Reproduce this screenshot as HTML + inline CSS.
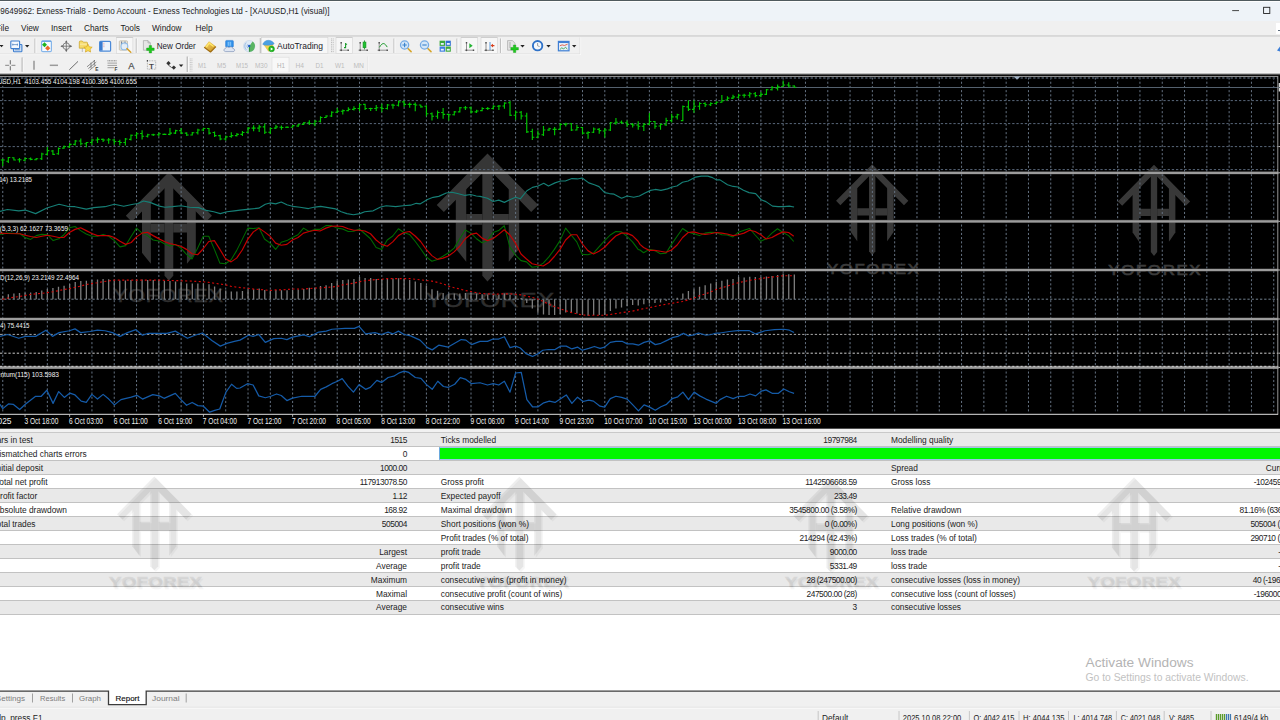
<!DOCTYPE html>
<html lang="en">
<head>
<meta charset="utf-8">
<title>69649962: Exness-Trial8 - Demo Account - Exness Technologies Ltd - [XAUUSD,H1 (visual)]</title>
<style>
html,body{margin:0;padding:0;width:1280px;height:720px;overflow:hidden;background:#fff;}
body{font-family:"Liberation Sans",sans-serif;font-size:8.35px;color:#1a1a1a;position:relative;}
#app{position:absolute;left:0;top:0;width:1280px;height:720px;overflow:hidden;background:#fff;}
.abs{position:absolute;white-space:nowrap;}
.titlebar{position:absolute;left:0;top:0;width:1280px;height:21.500px;background:#eef3f8;border-top:1.100px solid #4f5a5e;box-shadow:inset 0 1px 0 #fdfdfd;box-sizing:border-box;}
.titlebar .t{position:absolute;right:950.5px;top:6.3px;font-size:8.15px;color:#1d1d1d;white-space:nowrap;}
.menubar{position:absolute;left:0;top:21px;width:1280px;height:14.400px;background:#f0f0f0;border-bottom:0.600px solid #d8d8d8;}
.menubar span{position:absolute;top:2.1px;font-size:8.3px;color:#1a1a1a;white-space:nowrap;}
.tb1{position:absolute;left:0;top:37px;width:1280px;height:19px;background:#f0f0f0;}
.tb2{position:absolute;left:0;top:56px;width:1280px;height:19px;background:#f0f0f0;}
.chartwrap{position:absolute;left:0;top:72px;width:1280px;height:357px;}
.report{position:absolute;left:0;top:428.6px;width:1280px;height:190px;background:#fff;}
.row{position:absolute;left:0;width:1280px;height:13.2px;border-bottom:0.8px solid #c2c2c2;}
.row.g{background:#e9e9e9;}
.row.w{background:#fff;}
.c{position:absolute;white-space:nowrap;font-size:8.35px;color:#1c1c1c;line-height:13.4px;top:0.7px;}
.n{letter-spacing:-0.45px;}
.tabs{position:absolute;left:0;top:690px;width:1280px;height:18px;background:#f0f0f0;}
.status{position:absolute;left:0;top:708px;width:1280px;height:12px;background:#f0f0f0;border-top:1px solid #fbfbfb;box-sizing:border-box;}
</style>
</head>
<body>
<div id="app">

<div class="titlebar"><span class="t">69649962: Exness-Trial8 - Demo Account - Exness Technologies Ltd - [XAUUSD,H1 (visual)]</span>
<svg class="abs" style="left:1220px;top:0" width="60" height="21" viewBox="0 0 60 21"><path d="M12.2 9.6h6.8" stroke="#333" stroke-width="0.9" fill="none"/><rect x="43.6" y="6.3" width="6.2" height="6.2" fill="none" stroke="#222" stroke-width="0.9"/></svg>
</div>
<div class="menubar"><span style="right:1271px">File</span><span style="left:21px">View</span><span style="left:51px">Insert</span><span style="left:84px">Charts</span><span style="left:120.5px">Tools</span><span style="left:152px">Window</span><span style="left:195.5px">Help</span>
<div class="abs" style="left:1276px;top:2.200px;width:4px;height:10.800px;background:#fff;"></div><div class="abs" style="left:1278px;top:9.200px;width:2px;height:1px;background:#5a6a7c;"></div>
</div>

<svg class="abs" style="left:0;top:36px" width="1280" height="40" viewBox="0 36 1280 40" font-family="Liberation Sans, sans-serif">
<defs>
<linearGradient id="gBlue" x1="0" y1="0" x2="0" y2="1"><stop offset="0" stop-color="#7fb2ea"/><stop offset="1" stop-color="#2f6fc4"/></linearGradient>
<linearGradient id="gGold" x1="0" y1="0" x2="1" y2="1"><stop offset="0" stop-color="#f7d774"/><stop offset="1" stop-color="#c98f14"/></linearGradient>
<linearGradient id="gGreen" x1="0" y1="0" x2="0" y2="1"><stop offset="0" stop-color="#5fe05f"/><stop offset="1" stop-color="#12a012"/></linearGradient>
</defs>
<rect x="0" y="36" width="1280" height="40" fill="#f0f0f0"/>
<!-- toolbar1 band edges -->
<path d="M0 54.6H580.6V37.5" fill="none" stroke="#fdfdfd" stroke-width="1"/>
<path d="M0 53.9H579.9V37.5" fill="none" stroke="#d6d6d6" stroke-width="0.6"/>
<rect x="0" y="36" width="1280" height="0.800" fill="#d6d6d6"/>
<!-- pressed buttons -->
<g fill="#f7f7f7" stroke="#d4d4d4" stroke-width="0.600">
<rect x="116.3" y="37.6" width="16.6" height="15.8"/>
<rect x="261.3" y="37.6" width="66.6" height="15.8"/>
<rect x="336" y="37.6" width="16.3" height="15.8"/>
<rect x="461" y="37.6" width="16.6" height="15.8"/>
<rect x="481" y="37.6" width="16.3" height="15.8"/>
</g>
<g fill="#cdcdcd"><rect x="116.300" y="36.900" width="16.600" height="1"/><rect x="336" y="36.900" width="16.300" height="1"/><rect x="461" y="36.900" width="16.600" height="1"/><rect x="481" y="36.900" width="16.300" height="1"/></g>
<!-- separators tb1 -->
<g stroke="#bdbdbd" stroke-width="1.1"><path d="M35 38.5V53M136.300 38.500V53M260.300 38V53.300M394 38.500V53M457 38.500V53M500.500 38.500V53"/></g>
<g stroke="#fcfcfc" stroke-width="0.8"><path d="M35.9 38.5V53M137.2 38.5V53M394.9 38.5V53M457.9 38.5V53M501.4 38.5V53"/></g>
<!-- grip -->
<path d="M331.5 38.5V53M333.2 38.5V53" stroke="#b5b5b5" stroke-width="0.9" stroke-dasharray="0.9 0.9"/>
<!-- dropdown arrows -->
<g fill="#222"><path d="M-0.5 45h4l-2 2.3z"/><path d="M25 45h4.4l-2.2 2.4z"/><path d="M520.3 45h4.4l-2.2 2.4z"/><path d="M546.3 45h4.4l-2.2 2.4z"/><path d="M572 45h4.4l-2.2 2.4z"/></g>
<!-- profiles icon -->
<g fill="#f4f8fd" stroke="#3f7fcf" stroke-width="1.1"><rect x="13.5" y="44.5" width="8.4" height="7.2" rx="0.8" fill="#cfe0f5"/><rect x="10.8" y="41" width="8.8" height="7.6" rx="0.8"/></g>
<path d="M12.3 44.6h5.6M12.8 43.6v2M17.4 43.6v2M15 49.8h5" stroke="#4a7fc0" stroke-width="0.7" fill="none"/>
<!-- market watch -->
<rect x="41.600" y="41" width="9.800" height="10.600" rx="1.200" fill="#f7fbff" stroke="#86b6ea" stroke-width="1.200"/><rect x="41.600" y="40.600" width="9.800" height="1.500" rx="0.600" fill="#6fa6e4"/>
<path d="M44.500 42.200l2.500 2.500-2.500 2.500-2.500-2.500z" fill="#1fb41f"/><path d="M47.700 45.600l2.600 2.600-2.600 2.600-2.600-2.600z" fill="#ee6a2a"/>
<!-- data window crosshair -->
<g stroke="#6a6a6a" stroke-width="0.800" fill="none"><circle cx="66.300" cy="46.200" r="3.300"/><path d="M66.300 41v10.400M61.100 46.200h10.400"/></g><g fill="#666"><path d="M66.300 40.300l1.300 2.300h-2.600zM66.300 52.100l1.300-2.300h-2.600zM60.400 46.200l2.300-1.300v2.600zM72.200 46.200l-2.300-1.300v2.600z"/></g>
<!-- navigator folder+star -->
<path d="M79.300 42c0-.6.400-1 1-1h2l1 1.200h3.400c.5 0 .8.300.8.800v5.200h-8.200z" fill="#f6dc6e" stroke="#c9a227" stroke-width="0.700"/><path d="M80 44.200h6.800" stroke="#fbeeb0" stroke-width="0.900"/><path d="M82.3 48v4" stroke="#999" stroke-width="0.6"/>
<path d="M88 44.2l1.3 2.6 2.9.4-2.1 2 .5 2.9-2.6-1.4-2.6 1.4.5-2.9-2.1-2 2.9-.4z" fill="#f8dc52" stroke="#d29a12" stroke-width="0.6"/>
<!-- terminal -->
<rect x="99.6" y="41.4" width="11" height="9.8" rx="1" fill="#eef4fc" stroke="#4c8ad8" stroke-width="1.2"/><rect x="100" y="42" width="2.6" height="8.6" fill="#3b7bd0"/><path d="M103.4 43.3h1M103.4 45h1M103.4 46.7h1" stroke="#d66" stroke-width="0.6"/>
<!-- tester -->
<rect x="119.300" y="40.800" width="8.200" height="9.400" rx="0.800" fill="#e9e5da" stroke="#bdb5a2" stroke-width="0.700"/><path d="M121.600 41.500v3.300M125 41.500v3.300" stroke="#4a5e80" stroke-width="0.800"/>
<circle cx="124.400" cy="46.400" r="3.400" fill="#e4f0fb" fill-opacity="0.850" stroke="#8dbbe9" stroke-width="1.100"/><path d="M127 48.6l3.8 3.6" stroke="#d6a02a" stroke-width="1.5" stroke-linecap="round"/>
<!-- new order -->
<path d="M143.400 40.600h4.600l2.300 2.300v7.300h-6.900z" fill="#e6e6e6" stroke="#a6a6a6" stroke-width="0.700"/><path d="M148 40.6v2.3h2.3" fill="none" stroke="#9a9a9a" stroke-width="0.6"/>
<path d="M149.2 45.6h2.4v2.4h2.6v2.4h-2.6v2.5h-2.4v-2.5h-2.6v-2.4h2.6z" fill="#1ec81e" stroke="#0f9a0f" stroke-width="0.4"/>
<text x="156.8" y="48.800" font-size="8.600" fill="#1c1c2a" textLength="39" lengthAdjust="spacingAndGlyphs">New Order</text>
<!-- metaeditor gold -->
<path d="M204.200 47.300L209 41.200L215.900 46.600L210.500 52Z" fill="url(#gGold)"/><path d="M204.200 47.300L210.500 52L215.900 46.600" fill="none" stroke="#a06c12" stroke-width="1.200" stroke-linejoin="round"/><path d="M206.300 47l3-3.800 4.300 3.400" fill="none" stroke="#ffe96a" stroke-width="1.300"/>
<!-- blue cloud -->
<rect x="225.600" y="40.400" width="7.800" height="6.800" rx="1" fill="#2f8fe8" stroke="#2a78d0" stroke-width="0.500"/><rect x="227.600" y="41.800" width="3.600" height="4" fill="#7cc0f8"/><path d="M229.400 41.800v4" stroke="#2f8fe8" stroke-width="0.600"/><path d="M225.600 51.600c-2 0-2.300-2.800-.200-3.100.300-1.700 2.600-2.200 3.500-.900 1.300-1.500 3.900-.800 4 1 2.100-.100 2.400 2.900.300 3z" fill="#dfe6f2" stroke="#7f93b8" stroke-width="0.700"/>
<!-- signals -->
<circle cx="249.200" cy="46.200" r="5.700" fill="#dfeaf6" stroke="#b9cbe2" stroke-width="0.500"/><path d="M246.300 42.600a5 5 0 0 0 0 7.200M247.800 44.200a3 3 0 0 0 0 4" fill="none" stroke="#8fb2de" stroke-width="0.800"/><path d="M249.200 46.200L252.600 41.600A5.700 5.700 0 0 1 249.600 51.900Z" fill="#58b462"/><path d="M249.400 46.200v5.600" stroke="#2f8a3c" stroke-width="1"/><circle cx="249.200" cy="46" r="1.200" fill="#1c5fc4"/>
<!-- autotrading icon -->
<path d="M263.800 44.600l4.700 6.600 3.600-1.600.900-5.600z" fill="#f2d34c" stroke="#d0a626" stroke-width="0.400"/><path d="M262.700 44.300c.800-2.300 3-4 5.700-4 2.600 0 4.800 1.500 5.800 3.400-1.700 1.600-9.700 2.300-11.500.600z" fill="#4aa0e2" stroke="#3a86cc" stroke-width="0.400"/><circle cx="271.600" cy="48.900" r="2.900" fill="#1fb81f" stroke="#128a12" stroke-width="0.400"/><path d="M270.700 47.400v3l2.500-1.500z" fill="#fff"/>
<text x="277" y="48.800" font-size="8.600" fill="#1c1c2a" textLength="46" lengthAdjust="spacingAndGlyphs">AutoTrading</text>
<!-- chart type icons -->
<g stroke="#808080" stroke-width="0.850" fill="none"><path d="M341.200 42.600v8.600M339.500 50.200h8.800"/><path d="M360.200 42.600v8.600M358.500 50.200h8.800"/><path d="M379.200 42.600v8.600M377.500 50.200h9.800"/><path d="M466.500 42.600v8.600M464.800 50.200h8.800"/><path d="M486 42.600v8.600M484.300 50.300h8.800"/></g>
<g fill="#4e4e4e"><path d="M340.500 42.100h1.400v1.400h-1.400zM347.500 49.500h1.400v1.400h-1.400zM340.500 49.500h1.400v1.400h-1.400zM359.500 42.100h1.400v1.400h-1.400zM366.500 49.500h1.400v1.400h-1.400zM359.500 49.500h1.400v1.400h-1.400zM378.500 42.100h1.400v1.400h-1.400zM386.500 49.500h1.400v1.400h-1.400zM378.500 49.500h1.400v1.400h-1.400zM465.800 42.100h1.400v1.400h-1.400zM472.800 49.500h1.400v1.400h-1.400zM465.800 49.500h1.400v1.400h-1.400zM485.300 42.100h1.400v1.400h-1.400zM492.300 49.600h1.400v1.400h-1.400zM485.300 49.600h1.400v1.400h-1.400z"/></g>
<path d="M345.600 43v5.200M344 47.600h1.600M345.600 44.200h1.500" stroke="#1a9a2a" stroke-width="1.100" fill="none"/>
<path d="M364.500 40.400v9" stroke="#1a8a2a" stroke-width="0.800"/><rect x="363" y="42" width="3" height="5.800" fill="#22c032" stroke="#148a22" stroke-width="0.500"/>
<path d="M379.400 47.300c1.800-3 3.200-4 4.400-3.700 1.300.3 2.300 1.700 3.400 3.500" fill="none" stroke="#1a9a2a" stroke-width="1"/>
<path d="M469.300 43.200v5l3.400-2.500z" fill="#22b432"/>
<path d="M490 42v8" stroke="#4a8fd8" stroke-width="0.900"/><path d="M490.600 45.600l2.400-1.900v1.200h1.400v1.400h-1.400v1.200z" fill="#d8401c"/>
<!-- zoom icons -->
<g><path d="M407.400 48l3.700 3.600" stroke="#d6a52c" stroke-width="1.600" stroke-linecap="round"/><circle cx="404.600" cy="45" r="4.100" fill="#d4e7f8" stroke="#74aae4" stroke-width="1.300"/><path d="M402.400 45h4.400M404.600 42.800v4.400" stroke="#3a82cc" stroke-width="1.100"/></g>
<g><path d="M427.300 48l3.700 3.600" stroke="#d6a52c" stroke-width="1.600" stroke-linecap="round"/><circle cx="424.500" cy="45" r="4.100" fill="#d4e7f8" stroke="#74aae4" stroke-width="1.300"/><path d="M422.300 45h4.400" stroke="#3a82cc" stroke-width="1.100"/></g>
<!-- tile -->
<rect x="439.600" y="40.700" width="5.400" height="5.200" fill="#3aa83a"/><rect x="445.600" y="40.700" width="5.200" height="5.200" fill="#2f6fd0"/><rect x="439.600" y="46.500" width="5.400" height="5.200" fill="#3f7fe0"/><rect x="445.600" y="46.500" width="5.200" height="5.200" fill="#3aa83a"/>
<g fill="#e6f1ff"><rect x="440.800" y="43" width="3" height="1.800"/><rect x="446.800" y="43" width="3" height="1.800"/><rect x="440.800" y="48.800" width="3" height="1.800"/><rect x="446.800" y="48.800" width="3" height="1.800"/></g>
<!-- indicators -->
<path d="M507.600 40.600h4.800l2.600 2.600v7h-7.400z" fill="#e6e6e6" stroke="#a6a6a6" stroke-width="0.700"/><path d="M510 42v6" stroke="#888" stroke-width="0.600"/>
<path d="M513.400 45h2.400v2.500h2.600v2.400h-2.600v2.600h-2.400v-2.600h-2.600v-2.400h2.600z" fill="#1ec81e" stroke="#0f9a0f" stroke-width="0.400"/>
<!-- clock -->
<circle cx="537.600" cy="45.700" r="4.700" fill="#f4f8fc" stroke="#2f72c8" stroke-width="1.900"/><path d="M537.600 43v2.800l2 .8" fill="none" stroke="#777" stroke-width="0.700"/>
<!-- template -->
<rect x="558.400" y="41.400" width="10.600" height="9.400" fill="#e4eefa" stroke="#3f7fd4" stroke-width="1.200"/><rect x="558.400" y="41.400" width="10.600" height="1.600" fill="#3f7fd4"/><path d="M559.800 45.800l2.300-.9 2.300.6 3.200-1.300" fill="none" stroke="#e0452a" stroke-width="0.800"/><path d="M559.800 49.600l2-1.800 1.800 1.200 1.800-1.800 2 1.900" fill="none" stroke="#2c9a3c" stroke-width="0.800"/>
<!-- right blue bit -->
<path d="M1277 50.500l3-4v5z" fill="#3d7fd8"/>
<!-- toolbar 2 -->
<path d="M0 73.300H368.600V56.500" fill="none" stroke="#fdfdfd" stroke-width="1"/>
<path d="M0 72.700H367.900V56.500" fill="none" stroke="#dadada" stroke-width="0.600"/>
<g stroke="#bcbcbc" stroke-width="1.400"><path d="M22.200 57.500V71.800M187.300 56.500V73"/></g><g stroke="#fcfcfc" stroke-width="0.800"><path d="M23.200 58V71.500M188.400 57V72.500"/></g>
<path d="M190.300 58.500V71.500M191.900 58.500V71.500" stroke="#b8b8b8" stroke-width="0.900" stroke-dasharray="0.900 0.900"/>
<rect x="272" y="57.200" width="17" height="15" fill="#f8f8f8" stroke="#dcdcdc" stroke-width="0.600"/>
<g stroke="#6c6c6c" fill="none"><path d="M10.300 60.200v4.200M10.300 66.200v4.200" stroke-width="0.900" stroke="#585858"/><path d="M5.200 65.300h4M11.400 65.300h4" stroke-width="1.300" stroke="#9a9a9a"/><path d="M34 60.800v9" stroke-width="1.200" stroke="#808080"/><path d="M49.800 65.300h8.200" stroke-width="1.500" stroke="#9a9a9a"/><path d="M69.300 69.800l8.700-8.400" stroke-width="1"/>
<path d="M87 66.800l8-6.600M88.300 68.600l8-6.600M89.600 70.200l6.500-5.400M91 62.600v5.800M94.300 60v5.600" stroke-width="0.750"/>
<path d="M107.500 60.800h9.500" stroke-width="0.800" stroke="#5a5a5a" stroke-dasharray="1 0.600"/><path d="M107.500 63.100h9.500M107.500 65.400h9.500M107.500 67.700h6.500" stroke-width="0.800" stroke="#8c8c8c"/>
<rect x="147.400" y="60.800" width="8.300" height="8.400" stroke-width="0.600" stroke-dasharray="0.800 0.800" stroke="#777"/></g>
<text x="95.300" y="70.900" font-size="4.800" font-weight="bold" fill="#3c3c3c">E</text><text x="114.500" y="70.900" font-size="4.800" font-weight="bold" fill="#3c3c3c">F</text>
<text x="128.300" y="68.900" font-size="9.400" fill="#505050" stroke="#505050" stroke-width="0.250">A</text>
<text x="149" y="68.500" font-size="8" fill="#2c2c2c" stroke="#2c2c2c" stroke-width="0.200">T</text>
<rect x="146.800" y="60.200" width="1.200" height="1.200" fill="#222"/>
<g fill="#333"><path d="M166.300 63.300l2.200-2.200 2.200 2.200-2.200 2.200z"/><path d="M171.600 67.600l2.200-2.200 2.200 2.200-2.200 2.200z"/><path d="M168.500 65.200l3.200 2.400" stroke="#333" stroke-width="0.800"/><path d="M178.900 64.600h4.400l-2.200 2.400z" fill="#222"/></g>
<g font-size="7.200" fill="#bcbcbc" lengthAdjust="spacingAndGlyphs"><text x="198.0" y="68" textLength="8.5" lengthAdjust="spacingAndGlyphs">M1</text><text x="217.0" y="68" textLength="9.0" lengthAdjust="spacingAndGlyphs">M5</text><text x="236.0" y="68" textLength="12.0" lengthAdjust="spacingAndGlyphs">M15</text><text x="255.0" y="68" textLength="12.5" lengthAdjust="spacingAndGlyphs">M30</text><text x="277.0" y="68" textLength="8.0" lengthAdjust="spacingAndGlyphs" fill="#b2b2b2">H1</text><text x="295.5" y="68" textLength="8.5" lengthAdjust="spacingAndGlyphs">H4</text><text x="315.5" y="68" textLength="8.0" lengthAdjust="spacingAndGlyphs">D1</text><text x="335.0" y="68" textLength="9.5" lengthAdjust="spacingAndGlyphs">W1</text><text x="353.5" y="68" textLength="10.5" lengthAdjust="spacingAndGlyphs">MN</text></g>
</svg>

<svg class="abs" style="left:0;top:72px" width="1280" height="358" viewBox="0 72 1280 358" font-family="Liberation Sans, sans-serif">
<defs><linearGradient id="tg" x1="0" y1="0" x2="0" y2="1"><stop offset="0" stop-color="#f0f0f0"/><stop offset="0.150" stop-color="#f5f5f5"/><stop offset="0.300" stop-color="#e0e0e0"/><stop offset="0.550" stop-color="#6a6a6a"/><stop offset="0.800" stop-color="#1c1c1c"/><stop offset="1" stop-color="#141414"/></linearGradient><linearGradient id="sg" x1="0" y1="0" x2="0" y2="1"><stop offset="0" stop-color="#454545"/><stop offset="0.330" stop-color="#9c9c9c"/><stop offset="0.850" stop-color="#9c9c9c"/><stop offset="1" stop-color="#4a4a4a"/></linearGradient></defs>
<rect x="0" y="72" width="1280" height="4" fill="url(#tg)"/>
<rect x="0" y="75.500" width="1280" height="353.200" fill="#000"/>
<rect x="1278.700" y="83" width="1.300" height="8.500" fill="#d6d6d6"/><path d="M1278.300 100.600h1.700M1278.300 123.600h1.700M1278.300 146.600h1.700M1278.300 172.800h1.700M1278.300 221.300h1.700M1278.300 270h1.700M1278.300 319h1.700M1278.300 353.200h1.700M1278.300 367.400h1.700" stroke="#bdbdbd" stroke-width="1"/>
<g transform="translate(168.9 172) scale(1.18)" fill="rgb(255,255,255)" opacity="0.21"><path d="M0 0L36.5 37L31.41 42.09L0 10.18L-31.41 42.09L-36.5 37Z"/><path d="M-22.8 24.8L-15.3 17.3V77.8L-22.8 68.5Z"/><path d="M22.8 24.8L15.3 17.3V77.8L22.8 68.5Z"/><path d="M-3.7 9.18H3.7V88L0 92L-3.7 88Z"/><path d="M-15.3 43.6H-3.7V51.2H-15.3ZM3.7 43.6H15.3V51.2H3.7Z"/></g>
<g transform="translate(487.5 153.5) scale(1.39)" fill="rgb(255,255,255)" opacity="0.21"><path d="M0 0L36.5 37L31.41 42.09L0 10.18L-31.41 42.09L-36.5 37Z"/><path d="M-22.8 24.8L-15.3 17.3V77.8L-22.8 68.5Z"/><path d="M22.8 24.8L15.3 17.3V77.8L22.8 68.5Z"/><path d="M-3.7 9.18H3.7V88L0 92L-3.7 88Z"/><path d="M-15.3 43.6H-3.7V51.2H-15.3ZM3.7 43.6H15.3V51.2H3.7Z"/></g>
<g transform="translate(872.2 164.2) scale(0.99)" fill="rgb(255,255,255)" opacity="0.22"><path d="M0 0L36.5 37L32.12 41.38L0 8.77L-32.12 41.38L-36.5 37Z"/><path d="M-21.6 23.6L-15.1 17.1V77.8L-21.6 68.5Z"/><path d="M21.6 23.6L15.1 17.1V77.8L21.6 68.5Z"/><path d="M-3.2 7.77H3.2V88L0 92L-3.2 88Z"/><path d="M-15.1 44.4H-3.2V51.7H-15.1ZM3.2 44.4H15.1V51.7H3.2Z"/></g>
<g transform="translate(1154 164.8) scale(0.99)" fill="rgb(255,255,255)" opacity="0.22"><path d="M0 0L36.5 37L32.12 41.38L0 8.77L-32.12 41.38L-36.5 37Z"/><path d="M-21.6 23.6L-15.1 17.1V77.8L-21.6 68.5Z"/><path d="M21.6 23.6L15.1 17.1V77.8L21.6 68.5Z"/><path d="M-3.2 7.77H3.2V88L0 92L-3.2 88Z"/><path d="M-15.1 44.4H-3.2V51.7H-15.1ZM3.2 44.4H15.1V51.7H3.2Z"/></g>
<g opacity="0.18"><text transform="translate(168.33 302) scale(1.2 1)" text-anchor="middle" font-size="18" letter-spacing="0.56" fill="#fff" stroke="#fff" stroke-width="0.3">YOFOREX</text></g>
<g opacity="0.18"><text transform="translate(490.45 306.5) scale(1.2 1)" text-anchor="middle" font-size="21" letter-spacing="0.74" fill="#fff" stroke="#fff" stroke-width="0.35">YOFOREX</text></g>
<g opacity="0.23"><text transform="translate(873.61 274.4) scale(1.2 1)" text-anchor="middle" font-size="14" letter-spacing="1.35" fill="#fff" stroke="#fff" stroke-width="0.55">YOFOREX</text></g>
<g opacity="0.23"><text transform="translate(1155.25 274.8) scale(1.2 1)" text-anchor="middle" font-size="14" letter-spacing="1.42" fill="#fff" stroke="#fff" stroke-width="0.55">YOFOREX</text></g>
<path d="M2.75 77.500V413.500M25.05 77.500V413.500M47.35 77.500V413.500M69.64 77.500V413.500M91.94 77.500V413.500M114.24 77.500V413.500M136.54 77.500V413.500M158.84 77.500V413.500M181.13 77.500V413.500M203.43 77.500V413.500M225.73 77.500V413.500M248.03 77.500V413.500M270.33 77.500V413.500M292.62 77.500V413.500M314.92 77.500V413.500M337.22 77.500V413.500M359.52 77.500V413.500M381.82 77.500V413.500M404.11 77.500V413.500M426.41 77.500V413.500M448.71 77.500V413.500M471.01 77.500V413.500M493.31 77.500V413.500M515.6 77.500V413.500M537.9 77.500V413.500M560.2 77.500V413.500M582.5 77.500V413.500M604.8 77.500V413.500M627.09 77.500V413.500M649.39 77.500V413.500M671.69 77.500V413.500M693.99 77.500V413.500M716.29 77.500V413.500M738.58 77.500V413.500M760.88 77.500V413.500M783.18 77.500V413.500M805.48 77.500V413.500M827.78 77.500V413.500M850.07 77.500V413.500M872.37 77.500V413.500M894.67 77.500V413.500M916.97 77.500V413.500M939.27 77.500V413.500M961.56 77.500V413.500M983.86 77.500V413.500M1006.16 77.500V413.500M1028.46 77.500V413.500M1050.76 77.500V413.500M1073.05 77.500V413.500M1095.35 77.500V413.500M1117.65 77.500V413.500M1139.95 77.500V413.500M1162.25 77.500V413.500M1184.54 77.500V413.500M1206.84 77.500V413.500M1229.14 77.500V413.500M1251.44 77.500V413.500M1273.74 77.500V413.500" stroke="#657282" stroke-width="1" stroke-dasharray="2.100 2.100" fill="none"/>
<path d="M0 100.6H1278M0 123.6H1278M0 146.6H1278M0 169.6H1278" stroke="#59677a" stroke-width="1" stroke-dasharray="2.300 1.900" fill="none"/>
<path d="M0 78H1278" stroke="#37404b" stroke-width="1.800" stroke-dasharray="2.300 1.900" fill="none"/>
<path d="M0 76.500H1277.800" stroke="#8e8e8e" stroke-width="1" fill="none"/>
<path d="M0 87.500H1280" stroke="#54616e" stroke-width="1.200" fill="none"/>
<path d="M0 299.200H1278" stroke="#7f8f9f" stroke-width="0.900" stroke-dasharray="2.300 1.900" fill="none"/>
<path d="M0 334.400H1278" stroke="#a9a9a9" stroke-width="1" stroke-dasharray="2.300 1.900" fill="none"/>
<path d="M0 353.200H1278" stroke="#cdcdcd" stroke-width="1" stroke-dasharray="2.300 1.900" fill="none"/>
<rect x="0" y="171.3" width="1278.500" height="3" fill="url(#sg)"/>
<rect x="0" y="219.8" width="1278.500" height="3" fill="url(#sg)"/>
<rect x="0" y="268.5" width="1278.500" height="3" fill="url(#sg)"/>
<rect x="0" y="317.5" width="1278.500" height="3" fill="url(#sg)"/>
<rect x="0" y="365.9" width="1278.500" height="3" fill="url(#sg)"/>
<path d="M0 366.300H1278" stroke="#e8e8e8" stroke-width="0.800" stroke-dasharray="2.100 2.100" fill="none"/>
<path d="M1277.800 76V414.200" stroke="#a8a8a8" stroke-width="0.900" fill="none"/>
<path d="M0 414.300H1278.200" stroke="#e2e2e2" stroke-width="1" fill="none"/>
<path d="M1013.500 76.500h7l-3.500 3.200z" fill="#9fb0c4"/>
<path d="M2.75 158.75V166M0.75 160H2.75M2.75 160H4.75M8.32 156.88V163.12M6.32 161.25H8.32M8.32 157.5H10.32M13.9 157.25V160.62M11.9 157.75H13.9M13.9 160H15.9M19.47 158.12V162.5M17.47 159.75H19.47M19.47 159.75H21.47M25.05 157.5V161.25M23.05 160.25H25.05M25.05 158.5H27.05M30.62 157.5V160.25M28.62 158.75H30.62M30.62 159.38H32.62M36.2 158.12V160.25M34.2 159.75H36.2M36.2 158.75H38.2M41.77 152.75V160M39.77 158.75H41.77M41.77 154H43.77M47.35 146.88V155.62M45.35 154.38H47.35M47.35 150.62H49.35M52.92 150V155M50.92 151H52.92M52.92 154.38H54.92M58.49 147.5V154.75M56.49 153.75H58.49M58.49 148.5H60.49M64.07 145.62V148.75M62.07 148.12H64.07M64.07 146.5H66.07M69.64 143.12V148.12M67.64 146.88H69.64M69.64 144.38H71.64M75.22 140V145.62M73.22 144.38H75.22M75.22 141H77.22M80.79 138.5V145.62M78.79 141H80.79M80.79 143.75H82.79M86.37 141.88V147.25M84.37 143.75H86.37M86.37 142.5H88.37M91.94 138.75V145M89.94 142.5H91.94M91.94 140H93.94M97.52 137.25V143.12M95.52 140H97.52M97.52 139.38H99.52M103.09 138.5V141.88M101.09 139.38H103.09M103.09 140H105.09M108.67 138.12V143.75M106.67 140H108.67M108.67 139.75H110.67M114.24 138.75V144.75M112.24 140H114.24M114.24 141.5H116.24M119.81 139.75V145.62M117.81 141.5H119.81M119.81 142.5H121.81M125.39 138.12V145.62M123.39 142.5H125.39M125.39 139H127.39M130.96 134.38V140.62M128.96 139.38H130.96M130.96 135.25H132.96M136.54 132.25V138.75M134.54 135.25H136.54M136.54 133.75H138.54M142.11 130.25V139.38M140.11 133.5H142.11M142.11 136.25H144.11M147.69 133.75V137.5M145.69 136.25H147.69M147.69 134.75H149.69M153.26 133.75V136M151.26 134.75H153.26M153.26 134.75H155.26M158.84 132.5V136.25M156.84 134.75H158.84M158.84 133.75H160.84M164.41 133.5V135M162.41 134.38H164.41M164.41 134.38H166.41M169.98 128.12V135.25M167.98 134.38H169.98M169.98 133.12H171.98M175.56 129.75V134M173.56 133.12H175.56M175.56 130.62H177.56M181.13 128.12V134M179.13 130.62H181.13M181.13 133.12H183.13M186.71 132.25V136M184.71 133.12H186.71M186.71 135H188.71M192.28 131.88V135.62M190.28 135H192.28M192.28 132.75H194.28M197.86 128.75V134.38M195.86 132.75H197.86M197.86 130H199.86M203.43 127.75V131.25M201.43 130H203.43M203.43 128.5H205.43M209.01 128.12V134.38M207.01 128.5H209.01M209.01 133.12H211.01M214.58 131.5V136.88M212.58 132.5H214.58M214.58 135.62H216.58M220.16 134.75V140.25M218.16 135.62H220.16M220.16 139H222.16M225.73 135.62V140.62M223.73 139H225.73M225.73 136.88H227.73M231.3 132.25V137.75M229.3 136.5H231.3M231.3 135.62H233.3M236.88 133.12V136.5M234.88 135.62H236.88M236.88 134.38H238.88M242.45 131V136M240.45 134.38H242.45M242.45 132.5H244.45M248.03 126.88V133.12M246.03 132.25H248.03M248.03 128.12H250.03M253.6 125.25V131.25M251.6 128.12H253.6M253.6 128.12H255.6M259.18 124.75V131.88M257.18 128.12H259.18M259.18 126.88H261.18M264.75 123.5V134M262.75 126.88H264.75M264.75 132.25H266.75M270.33 127.25V134M268.33 132.25H270.33M270.33 128.5H272.33M275.9 124.75V129M273.9 128.12H275.9M275.9 126.88H277.9M281.47 125.62V129.75M279.47 127.25H281.47M281.47 127.5H283.47M287.05 126.25V128.12M285.05 127.25H287.05M287.05 127.25H289.05M292.62 125V127.75M290.62 127.25H292.62M292.62 125.62H294.62M298.2 123.75V126.88M296.2 126H298.2M298.2 124.75H300.2M303.77 121.88V125M301.77 124.38H303.77M303.77 122.75H305.77M309.35 120.25V125M307.35 122.75H309.35M309.35 123.5H311.35M314.92 120V126.25M312.92 123.75H314.92M314.92 121.25H316.92M320.5 116.25V122.5M318.5 121.25H320.5M320.5 117.5H322.5M326.07 115.25V118.12M324.07 117.5H326.07M326.07 116H328.07M331.65 111.25V116.88M329.65 116H331.65M331.65 112.25H333.65M337.22 108.12V113.12M335.22 112.25H337.22M337.22 111.25H339.22M342.79 109.38V114.38M340.79 111.25H342.79M342.79 110.62H344.79M348.37 107.25V111.25M346.37 110.62H348.37M348.37 109.38H350.37M353.94 106.25V110.62M351.94 109.38H353.94M353.94 108.5H355.94M359.52 103.75V111.25M357.52 108.5H359.52M359.52 104.75H361.52M365.09 103.75V110M363.09 104.38H365.09M365.09 108.5H367.09M370.67 107.75V111M368.67 108.5H370.67M370.67 108.5H372.67M376.24 105V111M374.24 108.5H376.24M376.24 107.75H378.24M381.82 103.75V112.25M379.82 107.75H381.82M381.82 108.5H383.82M387.39 104V109.38M385.39 108.5H387.39M387.39 105H389.39M392.96 103.75V108.75M390.96 105H392.96M392.96 105.25H394.96M398.54 100.62V106.5M396.54 105.25H398.54M398.54 101.88H400.54M404.11 100.62V106.88M402.11 101.88H404.11M404.11 104.38H406.11M409.69 102.5V107.75M407.69 104.38H409.69M409.69 104.38H411.69M415.26 102.5V111.25M413.26 104.38H415.26M415.26 105H417.26M420.84 104.75V107.75M418.84 105H420.84M420.84 106.88H422.84M426.41 105.25V116.25M424.41 106.25H426.41M426.41 113.75H428.41M431.99 112.5V120.62M429.99 113.75H431.99M431.99 116.25H433.99M437.56 110.62V118.75M435.56 116.25H437.56M437.56 112.5H439.56M443.14 108.12V118.75M441.14 112.5H443.14M443.14 114.38H445.14M448.71 113.75V120.62M446.71 114.38H448.71M448.71 114.75H450.71M454.28 111V115.62M452.28 114.75H454.28M454.28 111.88H456.28M459.86 106.88V112.5M457.86 111.88H459.86M459.86 107.75H461.86M465.43 106V110M463.43 107.75H465.43M465.43 107.75H467.43M471.01 106.5V113.5M469.01 107.75H471.01M471.01 111.88H473.01M476.58 109.75V113.12M474.58 111.88H476.58M476.58 111H478.58M482.16 107.25V111.25M480.16 110.62H482.16M482.16 108.5H484.16M487.73 106.88V110M485.73 108.5H487.73M487.73 108.5H489.73M493.31 105.25V109.38M491.31 108.5H493.31M493.31 106.25H495.31M498.88 105V110M496.88 106.25H498.88M498.88 106H500.88M504.45 102.25V108.75M502.45 106H504.45M504.45 103.12H506.45M510.03 101V116M508.03 102.75H510.03M510.03 115.25H512.03M515.6 110.62V119.75M513.6 115.25H515.6M515.6 112.25H517.6M521.18 111V119.38M519.18 112.25H521.18M521.18 116H523.18M526.75 112.75V133.12M524.75 116H526.75M526.75 131.88H528.75M532.33 128.75V140M530.33 131.5H532.33M532.33 137.25H534.33M537.9 130.62V138.12M535.9 137.25H537.9M537.9 134H539.9M543.48 126V136M541.48 134.75H543.48M543.48 130H545.48M549.05 127.75V131M547.05 130H549.05M549.05 128.75H551.05M554.63 126.88V135.25M552.63 129.38H554.63M554.63 129.38H556.63M560.2 123.12V130M558.2 129.38H560.2M560.2 124.38H562.2M565.77 122.75V126.5M563.77 124.38H565.77M565.77 124H567.77M571.35 123.12V131M569.35 123.75H571.35M571.35 130H573.35M576.92 124.75V130.62M574.92 130H576.92M576.92 127.5H578.92M582.5 126.88V134.38M580.5 127.5H582.5M582.5 133.12H584.5M588.07 131.25V138.75M586.07 133.12H588.07M588.07 132.5H590.07M593.65 127.5V133.12M591.65 132.25H593.65M593.65 129H595.65M599.22 128.12V133.75M597.22 129.38H599.22M599.22 130.62H601.22M604.8 128.12V137.5M602.8 131H604.8M604.8 130H606.8M610.37 121.88V131M608.37 130H610.37M610.37 122.75H612.37M615.94 118.12V124.75M613.94 123.12H615.94M615.94 122.25H617.94M621.52 120.62V124M619.52 122.25H621.52M621.52 122.75H623.52M627.09 120.62V126.88M625.09 122.75H627.09M627.09 124.38H629.09M632.67 123.12V127.5M630.67 124.38H632.67M632.67 125H634.67M638.24 121.25V129.75M636.24 125H638.24M638.24 126.25H640.24M643.82 123.12V131M641.82 126.25H643.82M643.82 124.38H645.82M649.39 113.12V125M647.39 124.38H649.39M649.39 121.5H651.39M654.97 121V128.75M652.97 121.5H654.97M654.97 126.25H656.97M660.54 123.5V129.75M658.54 126H660.54M660.54 124.38H662.54M666.12 117.75V126M664.12 124.75H666.12M666.12 120.62H668.12M671.69 113.75V122.5M669.69 120.62H671.69M671.69 116.88H673.69M677.26 113.75V119.38M675.26 116.88H677.26M677.26 114.75H679.26M682.84 105.62V121.25M680.84 120.62H682.84M682.84 106.5H684.84M688.41 100.25V111M686.41 106.88H688.41M688.41 109.38H690.41M693.99 100.25V112.75M691.99 109.38H693.99M693.99 106.25H695.99M699.56 102.25V109.75M697.56 106.25H699.56M699.56 103.5H701.56M705.14 102.25V106.88M703.14 103.5H705.14M705.14 104.75H707.14M710.71 102.25V106M708.71 104.75H710.71M710.71 103.5H712.71M716.29 101.25V104.38M714.29 103.5H716.29M716.29 102.25H718.29M721.86 95V102.75M719.86 102.25H721.86M721.86 100.62H723.86M727.43 96.25V100.62M725.43 100H727.43M727.43 98.12H729.43M733.01 94.75V99M731.01 98.12H733.01M733.01 96.88H735.01M738.58 93.75V98.5M736.58 97.25H738.58M738.58 95.25H740.58M744.16 93.75V97.75M742.16 95.25H744.16M744.16 95.25H746.16M749.73 91.88V97.75M747.73 95.25H749.73M749.73 93.75H751.73M755.31 91.88V97.25M753.31 93.75H755.31M755.31 95.62H757.31M760.88 91.88V97.25M758.88 95.62H760.88M760.88 94.38H762.88M766.46 89V95M764.46 94.38H766.46M766.46 89.75H768.46M772.03 86V90.62M770.03 89.75H772.03M772.03 87.5H774.03M777.61 84.38V90.62M775.61 88.12H777.61M777.61 86.88H779.61M783.18 80.62V86.5M781.18 86.5H783.18M783.18 85H785.18M788.75 82.25V87.5M786.75 85H788.75M788.75 86H790.75M794.33 85.25V87.5M792.33 86H794.33M794.33 87.25H796.33" stroke="#00c600" stroke-width="1.150" fill="none"/>
<polyline points="0,211.38 7.5,209.5 18.75,210.81 25.31,210.06 35.63,213.63 46.88,208 59.06,204.25 67.5,206.31 75,206.69 86.25,209.13 93.75,207.63 105,206.69 114.38,204.25 123.75,206.31 133.13,204.25 137.81,203.5 143.44,201.06 150,202.38 159.38,206.13 165,207.25 172.5,206.69 180.94,205.75 189.38,207.25 198.75,207.63 206.25,210.44 213.75,211.75 220.31,213.63 226.88,211.75 234.38,210.81 240,210.06 249.38,209.13 258.75,208.19 265.31,204.25 270,202.94 275.63,203.88 281.25,202 286.88,204.81 292.5,206.31 300,207.25 308.44,208.56 315,207.06 320.63,206.31 328.13,207.63 335.63,208.94 341.25,211.75 346.88,213.63 353.44,214.75 360,213.63 364.69,211.75 373.13,210.81 380.63,207.06 386.25,205.75 395.63,206.69 403.13,205.75 410.63,205.19 416.25,203.31 420,203.88 427.5,199.56 433.13,197.31 438.75,196.38 446.25,193 451.88,192.25 457.5,193.56 465,195.44 470.63,194.5 476.25,196 480,196.38 487.5,198.25 493.13,201.44 498.75,200.13 504.38,202.38 510.94,199.19 515.63,197.31 520.31,198.81 526.88,190.75 532.5,187.38 538.13,186.06 543.75,183.25 548.44,186.06 555,182.88 560.63,181 565.31,181 571.88,178.56 577.5,178.94 582.19,178 588.75,182.88 594.38,184.75 599.06,186.63 604.69,192.63 609.38,193.56 614.06,194.13 621.56,198.25 627.19,196 633.75,197.31 639.38,196 645,193 650.63,190.38 655.31,189.44 660.94,190.38 667.5,188.88 672.19,187 676.88,186.06 682.5,182.31 688.13,181 695.63,177.06 701.25,176.13 707.81,176.13 712.5,177.63 716.25,179.88 720,179.88 727.5,184.75 733.13,186.44 737.81,187 743.44,190.19 749.06,192.63 755.63,193.56 761.25,199.75 765.94,201.63 772.5,206.13 778.13,206.69 783.75,206.69 789.38,206.13 794.06,207.06" fill="none" stroke="#167f76" stroke-width="1.150" stroke-linejoin="round"/>
<polyline points="0,234.38 7.5,233.12 20,233.75 25,237.5 30.62,239.38 36.25,235.62 41.88,234.38 47.5,234.75 53.12,240.62 58.75,238.75 63.75,235 69.38,227.75 75,226.5 80.62,230.62 86.25,234 91.88,236.25 97.5,236.25 103.12,234.38 108.75,236.25 114.38,240.62 120,246.88 125.62,245.62 131.25,236.25 136.5,228.12 142.12,233.12 147.5,235.62 153.12,240 160,241.25 164.38,243.75 169.75,246 175.38,244.38 180.88,248.12 186.5,254.38 192,259 197.62,248.12 203.25,236.25 208.75,236.25 214.38,249.38 219.88,263.12 225.5,263.75 231.12,259.75 236.62,250.62 242.25,239.38 247.75,228.12 253.38,228.5 259,227.75 264.5,239 270.12,243.12 275.62,249.38 281.25,242.25 286.88,240.62 292.38,237.5 298,234.75 303.5,228.12 309.12,231.5 314.75,229.38 320,229.38 325.88,225.62 331.5,225.62 337,228.12 342.62,229 348.25,231.5 353.75,231.25 359.38,229 364.88,233.75 370.5,238.75 376.12,247.5 381.62,249.38 387.25,240 392.75,236 398.38,228.75 404,232.5 409.5,234.38 415.12,241.25 420.62,248.75 426.25,256.88 431.88,261.25 437.38,259.38 443,256.25 448.5,252.75 454.12,248.12 459.75,238.75 465.25,230 470.88,233.12 476.5,238.75 480,241.25 482,242.75 487.5,240.62 493.12,232.5 498.62,230.62 504.25,225.62 509.88,246.88 515.38,255 521,260.62 526.5,261.88 532.12,267.25 537.75,266.5 543.25,263.12 548.88,256.88 554.38,249.38 560,240.62 565.62,228.12 571.12,235 576.75,241.88 582.25,254.38 587.88,254.75 593.5,253.12 599,246.88 604.62,240.62 610.25,235 615.75,231.5 621.38,231.88 626.88,236.25 632.5,241.88 638.12,249.38 640,250 643.62,252.75 649.25,249.38 654.75,250.62 660.38,253.75 666,253.12 671.5,244.38 677.12,236.25 682.62,228.5 688.25,232.25 693.88,233.75 699.38,235.62 705,233.12 710.5,232.25 716.12,232.5 721.75,234.75 727.25,235 732.88,236.88 738.38,232.25 744,230.25 749.62,228.5 755.12,235 760.75,241.25 766.25,238.75 771.88,233.12 777.5,228.75 783,232.5 788.62,235.62 793.75,241.5" fill="none" stroke="#006c00" stroke-width="1.050" stroke-linejoin="round"/>
<polyline points="0,233.12 7.5,233.5 20,233.75 25,235.25 30.62,236.5 36.25,237.5 41.88,236.25 47.5,235.25 53.12,236.25 58.75,237.5 63.75,237.5 69.38,232.5 75,229.38 80.62,227.75 86.25,230.62 91.88,233.5 97.5,235.62 103.12,235.62 108.75,235.62 114.38,237.5 120,241.25 125.62,244.38 131.25,242.5 136.5,236.88 142.12,233.12 147.5,232.25 153.12,235.62 160,239.38 164.38,241.5 169.75,243.5 175.38,244.75 180.88,246.25 186.5,249.38 192,253.75 197.62,254.75 203.25,248.75 208.75,241.5 214.38,240.62 219.88,249.38 225.5,258.75 231.12,261.88 236.62,258.12 242.25,250 247.75,239.38 253.38,231.88 259,228.12 264.5,231.88 270.12,236.25 275.62,243.12 281.25,245.25 286.88,244.38 292.38,240 298,237.5 303.5,233.12 309.12,231.5 314.75,230.25 320,231 325.88,228.12 331.5,226.25 337,226 342.62,226.5 348.25,228.75 353.75,230.25 359.38,230.25 364.88,231 370.5,233.75 376.12,240 381.62,244.38 387.25,246.25 392.75,241.88 398.38,235.62 404,232.5 409.5,231.5 415.12,236 420.62,241.5 426.25,249.38 431.88,255.62 437.38,259.38 443,258.12 448.5,256 454.12,251.88 459.75,246.25 465.25,238.75 470.88,234.38 476.5,233.12 480,236.25 482,238.12 487.5,240.62 493.12,238.5 498.62,234.38 504.25,229.75 509.88,235 515.38,243.12 521,254 526.5,259 532.12,263.75 537.75,265 543.25,266 548.88,262.5 554.38,256.5 560,249.38 565.62,240 571.12,234.75 576.75,234.75 582.25,243.75 587.88,250.62 593.5,254 599,251.25 604.62,247.25 610.25,241.25 615.75,236 621.38,233.12 626.88,233.12 632.5,235.62 638.12,241.25 640,244.38 643.62,247.5 649.25,250.38 654.75,250.38 660.38,251.25 666,252.25 671.5,250 677.12,245 682.62,237.5 688.25,232.5 693.88,231.88 699.38,233.5 705,234.38 710.5,233.75 716.12,232.5 721.75,233.12 727.25,234 732.88,235.62 738.38,234.75 744,233.12 749.62,230.25 755.12,231.5 760.75,234.75 766.25,239 771.88,237.5 777.5,234.38 783,231.88 788.62,232.5 793.75,236.25" fill="none" stroke="#c40000" stroke-width="1.180" stroke-linejoin="round"/>
<path d="M2.75 299.25V295.75M8.32 299.25V294.25M13.9 299.25V293.62M19.47 299.25V293M25.05 299.25V292.75M30.62 299.25V292.38M36.2 299.25V292M41.77 299.25V290.5M47.35 299.25V289M52.92 299.25V288M58.49 299.25V286.75M64.07 299.25V285.75M69.64 299.25V284M75.22 299.25V282M80.79 299.25V281.12M86.37 299.25V280.75M91.94 299.25V279.88M97.52 299.25V279.5M103.09 299.25V279M108.67 299.25V279.25M114.24 299.25V279.88M119.81 299.25V280.5M125.39 299.25V280.5M130.96 299.25V279.88M136.54 299.25V279.5M142.11 299.25V279.5M147.69 299.25V279.88M153.26 299.25V279.88M158.84 299.25V279.88M164.41 299.25V281.12M169.98 299.25V281.12M175.56 299.25V281.5M181.13 299.25V281.75M186.71 299.25V283.62M192.28 299.25V283.62M197.86 299.25V283.62M203.43 299.25V283.25M209.01 299.25V284.25M214.58 299.25V286.5M220.16 299.25V288.62M225.73 299.25V290.5M231.3 299.25V291.5M236.88 299.25V291.5M242.45 299.25V291.12M248.03 299.25V289.25M253.6 299.25V289.25M259.18 299.25V288.62M264.75 299.25V289.88M270.33 299.25V290.5M275.9 299.25V289.88M281.47 299.25V290.25M287.05 299.25V290.25M292.62 299.25V289.88M298.2 299.25V289.5M303.77 299.25V289M309.35 299.25V287.75M314.92 299.25V287.75M320.5 299.25V286.12M326.07 299.25V285.25M331.65 299.25V283M337.22 299.25V281.12M342.79 299.25V279.88M348.37 299.25V279.5M353.94 299.25V279M359.52 299.25V277M365.09 299.25V278M370.67 299.25V278M376.24 299.25V279M381.82 299.25V279M387.39 299.25V278.62M392.96 299.25V278.62M398.54 299.25V278.25M404.11 299.25V278.62M409.69 299.25V279.88M415.26 299.25V281.5M420.84 299.25V283M426.41 299.25V285.5M431.99 299.25V289.25M437.56 299.25V290.75M443.14 299.25V293M448.71 299.25V293.62M454.28 299.25V293.62M459.86 299.25V293.62M465.43 299.25V293M471.01 299.25V293M476.58 299.25V293.62M482.16 299.25V294.25M487.73 299.25V294.5M493.31 299.25V294.88M498.88 299.25V294.5M504.45 299.25V293.62M510.03 299.25V294.88M515.6 299.25V296.5M521.18 299.25V298M526.75 299.25V303M532.33 299.25V308.62M537.9 299.25V312.75M543.48 299.25V314.5M549.05 299.25V314.88M554.63 299.25V314.88M560.2 299.25V314M565.77 299.25V312.38M571.35 299.25V313M576.92 299.25V313.62M582.5 299.25V314.88M588.07 299.25V315.75M593.65 299.25V314.88M599.22 299.25V314.88M604.8 299.25V314.88M610.37 299.25V311.12M615.94 299.25V308.62M621.52 299.25V307.38M627.09 299.25V306.12M632.67 299.25V304.88M638.24 299.25V305.5M643.82 299.25V304.25M649.39 299.25V303.62M654.97 299.25V303M660.54 299.25V302.38M666.12 299.25V301.12M671.69 299.25V299.25M677.26 299.25V297.75M682.84 299.25V293.62M688.41 299.25V291.12M693.99 299.25V289.25M699.56 299.25V286.75M705.14 299.25V285.25M710.71 299.25V283.62M716.29 299.25V281.75M721.86 299.25V280.75M727.43 299.25V279.5M733.01 299.25V279M738.58 299.25V277M744.16 299.25V277.38M749.73 299.25V276.75M755.31 299.25V277M760.88 299.25V277M766.46 299.25V276.5M772.03 299.25V276.12M777.61 299.25V274.88M783.18 299.25V273.62M788.75 299.25V274.25M794.33 299.25V274.5" stroke="#7e7e7e" stroke-width="1.300" fill="none"/>
<polyline points="2.5,299.25 8.12,298 13.62,297.38 19.25,296.5 24.88,295.5 30.38,294.5 36,293.88 41.5,293.38 47.12,292.62 52.75,291.75 58.25,290.75 63.88,289.5 69.5,288.62 75,287.38 80.62,286.12 86.25,284.5 91.75,283.62 97.38,282.75 102.88,281.75 108.5,280.88 114.12,280.12 119.62,280.12 125.25,280.12 130.88,280.12 136.38,280.12 142,280.12 147.5,280.12 153.12,280.12 158.75,280.12 169.75,280.5 180.88,280.75 192,281.12 203.25,281.75 208.75,282.38 214.38,283.25 219.88,284 225.5,284.88 231.12,286.38 236.62,287.12 242.25,287.75 247.75,288.25 253.38,289 259,289.5 264.5,289.88 270.12,290.5 275.62,289.88 281.25,289.88 286.88,289.5 292.38,289 298,289 303.5,289 309.12,288.62 314.75,288 320.38,288 325.88,287.38 331.5,287 337,286.5 342.62,284.88 348.25,284 353.75,283.25 359.38,281.75 364.88,280.75 370.5,280.12 376.12,279.5 381.62,279.25 387.25,278.62 392.75,278.62 398.38,278.62 404,278.62 409.5,278.62 415.12,279.25 420.62,279.88 426.25,280.5 431.88,281.12 437.38,282.38 443,283.88 448.5,286.12 454.12,287.75 459.75,289 465.25,290.5 470.88,291.5 476.5,292.75 482,293.62 487.5,293.88 493.12,294.25 498.62,294 504.25,293.88 509.88,293.88 515.38,294.25 521,294.88 526.5,296.12 532.12,297.38 537.75,299 543.25,301.5 548.88,304.25 554.38,306.5 560,308.62 565.62,310.75 571.12,312.38 576.75,313.88 582.25,314.88 587.88,315.25 593.5,315.25 599,315.25 604.62,315.25 610.25,314.5 615.75,313.62 621.38,312.75 626.88,312 632.5,311.12 638.12,309.88 643.62,308.62 649.25,307.75 654.75,306.5 660.38,305.25 666,304.25 671.5,303.38 677.12,302.38 682.62,301.5 688.25,299.88 693.88,298 699.38,295.75 705,294 710.5,292 716.12,289.5 721.75,287.75 727.25,286.12 732.88,284.25 738.38,282.75 744,281.5 749.62,280.25 755.12,279.5 760.75,278.62 766.25,277.75 771.88,277 777.5,276.5 783,275.75 788.62,275.75 794.12,275.75" fill="none" stroke="#d40808" stroke-width="1.150" stroke-dasharray="2 2.500"/>
<polyline points="0,336.38 7.5,334.5 18.75,338.25 25.31,336.38 35.63,336.38 45.94,330.19 52.5,336.38 59.06,332.63 69.38,330.75 75,328.88 80.63,332.63 90,331.5 97.5,330.19 105,330.75 112.5,332.63 120,336.38 127.5,332.63 135.94,329.63 142.5,335.25 148.13,333.38 159.38,333.38 166.88,333.38 175.31,331.13 180.94,334.5 187.5,338.25 195,335.25 202.5,333 211.88,340.5 220.31,346.13 226.88,343.31 234.38,341.44 240,340.13 248.44,335.25 253.13,336.38 258.75,334.5 265.31,342.38 273.75,338.63 281.25,338.25 286.88,339.56 292.5,337.13 303.75,334.88 309.38,336.75 318.75,332.06 326.25,331.13 331.88,329.25 345,328.31 354.38,328.31 359.06,326.44 365.63,333.94 375,332.63 381.56,334.5 388.13,332.06 392.81,333.94 398.44,331.13 404.06,334.5 410.63,335.81 420,340.13 427.5,347.63 432.19,349.88 438.75,345.19 448.13,347.06 454.69,343.31 461.25,339.56 465.94,340.13 471.56,344.63 480,341.44 487.5,341.44 493.13,339 498.75,339 504.38,336.75 510,347.63 515.63,346.13 520.31,348 525.94,353.63 532.5,356.44 538.13,353.63 542.81,350.25 548.44,349.5 555,349.5 560.63,346.13 566.25,346.13 571.88,348.94 577.5,347.06 582.19,350.25 588.75,348.38 594.38,346.5 600,348.38 604.69,347.06 610.31,342.38 615.94,341.44 622.5,341.44 627.19,343.88 632.81,343.88 638.44,345.19 644.06,342.38 649.69,340.88 655.31,344.63 660.94,343.31 667.5,340.13 672.19,337.69 677.81,336.38 683.44,333.38 688.13,335.81 693.75,334.88 698.44,333 705.94,335.25 711.56,334.5 716.25,333 720,333 729.38,331.5 737.81,330.56 749.06,330.56 755.63,333.94 765,330.75 774.38,329.63 783.75,329.25 789.38,330.19 794.06,332.44" fill="none" stroke="#155ba8" stroke-width="1.250" stroke-linejoin="round"/>
<polyline points="0,404.31 2.81,408.63 8.44,403.94 13.13,404.31 19.69,409.56 25.31,404.31 35.63,396.25 41.25,396.25 46.88,390.25 53.06,403.38 58.69,391.56 64.31,397.38 69.94,393.06 75,394.94 81.19,401.13 86.25,402.44 91.88,394.38 97.5,399.06 103.13,394.38 108.75,399.06 114.38,404.88 120.94,399.63 131.25,397.19 136.88,395.31 142.5,399.06 152.81,394.56 159.38,395.88 164.06,398.31 175.31,393.44 180.94,399.63 186.56,405.25 192.19,402.44 197.81,405.63 203.44,406.19 209.63,412.19 214.69,410.31 219.75,409 225.94,392.13 231.56,384.25 236.63,388.38 240,388 247.5,383.69 253.13,385 258.75,395.88 265.31,397.75 270.94,396.25 276.56,394 281.25,395.5 286.88,400.56 292.5,398.13 301.88,396.25 315,396.25 320.63,389.31 326.25,386.88 331.88,383.69 337.5,381.25 342.19,378.63 347.81,386.13 353.44,392.13 359.06,384.63 365.63,389.31 370.31,387.44 376.88,380.31 381.56,382.38 388.13,377.5 393.75,376.19 399.38,372.81 404.06,371.13 408.75,372.44 415.31,377.5 420.94,378.44 426.56,384.63 432.19,389.31 437.81,381.25 443.44,386.5 448.13,387.44 454.69,384.25 460.31,377.69 465.94,379.38 471.56,383.69 480,382.75 487.5,385 493.13,383.69 498.75,385 504.38,381.25 510,392.13 515.63,373 521.25,372.44 526.88,399.63 532.5,406.75 538.13,406.75 543.75,402.81 549.38,401.13 555,402.44 560.63,398.69 566.25,394.94 571.88,403.38 577.5,397.19 583.13,401.5 588.75,400.19 593.44,401.13 600,406.19 604.69,407.13 610.31,398.69 615.94,396.25 621.56,397.38 627.19,399.06 632.81,404.88 638.44,410.88 644.06,404.88 649.69,407.13 655.31,410.31 660.94,406.75 666.56,404.31 672.19,398.69 677.81,396.81 682.88,392.13 688.5,399.63 694.13,392.13 699.75,395.88 705.94,399.06 716.25,403.38 720,399.63 726.56,396.25 733.13,398.69 738.75,396.25 744.38,396.25 750,394 755.63,395.88 761.25,391.19 765.94,389.88 772.5,393.44 778.13,393.44 783.75,388.94 789.38,391.75 794.06,393.44" fill="none" stroke="#155ba8" stroke-width="1.250" stroke-linejoin="round"/>
<g fill="#f2f2f2">
<text transform="translate(136.5 84.2) scale(0.79 1)" text-anchor="end" font-size="8.1">XAUUSD,H1&#160; 4103.455 4104.198 4100.365 4100.655</text>
<text transform="translate(32 182.2) scale(0.76 1)" text-anchor="end" font-size="8.1">ADX(14) 13.2185</text>
<text transform="translate(68 231.2) scale(0.79 1)" text-anchor="end" font-size="8.1">Stoch(5,3,3) 62.1627 73.3659</text>
<text transform="translate(79 279.8) scale(0.78 1)" text-anchor="end" font-size="8.1">MACD(12,26,9) 23.2149 22.4964</text>
<text transform="translate(29.5 328.4) scale(0.76 1)" text-anchor="end" font-size="8.1">RSI(14) 75.4415</text>
<text transform="translate(59 377.2) scale(0.81 1)" text-anchor="end" font-size="8.1">Momentum(115) 103.5983</text>
</g>
<g font-size="8.400" fill="#f0f0f0">
<text x="11.500" y="423.900" text-anchor="end">3 Oct 2025</text>
<text x="24.45" y="423.900" textLength="34" lengthAdjust="spacingAndGlyphs">3 Oct 18:00</text>
<text x="69.04" y="423.900" textLength="34" lengthAdjust="spacingAndGlyphs">6 Oct 03:00</text>
<text x="113.64" y="423.900" textLength="34" lengthAdjust="spacingAndGlyphs">6 Oct 11:00</text>
<text x="158.24" y="423.900" textLength="34" lengthAdjust="spacingAndGlyphs">6 Oct 19:00</text>
<text x="202.83" y="423.900" textLength="34" lengthAdjust="spacingAndGlyphs">7 Oct 04:00</text>
<text x="247.43" y="423.900" textLength="34" lengthAdjust="spacingAndGlyphs">7 Oct 12:00</text>
<text x="292.02" y="423.900" textLength="34" lengthAdjust="spacingAndGlyphs">7 Oct 20:00</text>
<text x="336.62" y="423.900" textLength="34" lengthAdjust="spacingAndGlyphs">8 Oct 05:00</text>
<text x="381.22" y="423.900" textLength="34" lengthAdjust="spacingAndGlyphs">8 Oct 13:00</text>
<text x="425.81" y="423.900" textLength="34" lengthAdjust="spacingAndGlyphs">8 Oct 22:00</text>
<text x="470.41" y="423.900" textLength="34" lengthAdjust="spacingAndGlyphs">9 Oct 06:00</text>
<text x="515" y="423.900" textLength="34" lengthAdjust="spacingAndGlyphs">9 Oct 14:00</text>
<text x="559.6" y="423.900" textLength="34" lengthAdjust="spacingAndGlyphs">9 Oct 23:00</text>
<text x="604.2" y="423.900" textLength="38.2" lengthAdjust="spacingAndGlyphs">10 Oct 07:00</text>
<text x="648.79" y="423.900" textLength="38.2" lengthAdjust="spacingAndGlyphs">10 Oct 15:00</text>
<text x="693.39" y="423.900" textLength="38.2" lengthAdjust="spacingAndGlyphs">13 Oct 00:00</text>
<text x="737.98" y="423.900" textLength="38.2" lengthAdjust="spacingAndGlyphs">13 Oct 08:00</text>
<text x="782.58" y="423.900" textLength="38.2" lengthAdjust="spacingAndGlyphs">13 Oct 16:00</text>
</g>
<path d="M25.05 414.200V416.800M69.64 414.200V416.800M114.24 414.200V416.800M158.84 414.200V416.800M203.43 414.200V416.800M248.03 414.200V416.800M292.62 414.200V416.800M337.22 414.200V416.800M381.82 414.200V416.800M426.41 414.200V416.800M471.01 414.200V416.800M515.6 414.200V416.800M560.2 414.200V416.800M604.8 414.200V416.800M649.39 414.200V416.800M693.99 414.200V416.800M738.58 414.200V416.800M783.18 414.200V416.800" stroke="#c4c4c4" stroke-width="0.900" fill="none"/>
</svg>
<div class="report">
<div class="abs" style="left:0;top:0;width:1280px;height:3.800px;background:#f1f1f1;border-bottom:0.800px solid #c9c9c9;box-sizing:content-box"></div>
<div class="row g" style="top:4.6px">
<span class="c" style="right:1247.2px">Bars in test</span>
<span class="c n" style="right:873px">1515</span>
<span class="c" style="left:440.800px">Ticks modelled</span>
<span class="c n" style="right:423.2px">19797984</span>
<span class="c" style="left:891px">Modelling quality</span>
</div>
<div class="row w" style="top:18.56px">
<span class="c" style="right:1193.4px">Mismatched charts errors</span>
<span class="c n" style="right:873px">0</span>
</div>
<div class="row g" style="top:32.53px">
<span class="c" style="right:1237px">Initial deposit</span>
<span class="c n" style="right:873px">1000.00</span>
<span class="c" style="left:891px">Spread</span>
<span class="c" style="left:1265.8px">Current (26)</span>
</div>
<div class="row w" style="top:46.49px">
<span class="c" style="right:1232.5px">Total net profit</span>
<span class="c n" style="right:873px">117913078.50</span>
<span class="c" style="left:440.800px">Gross profit</span>
<span class="c n" style="right:423.2px">1142506668.59</span>
<span class="c" style="left:891px">Gross loss</span>
<span class="c n" style="left:1253.7px">-1024593590.09</span>
</div>
<div class="row g" style="top:60.46px">
<span class="c" style="right:1242.8px">Profit factor</span>
<span class="c n" style="right:873px">1.12</span>
<span class="c" style="left:440.800px">Expected payoff</span>
<span class="c n" style="right:423.2px">233.49</span>
</div>
<div class="row w" style="top:74.42px">
<span class="c" style="right:1213px">Absolute drawdown</span>
<span class="c n" style="right:873px">168.92</span>
<span class="c" style="left:440.800px">Maximal drawdown</span>
<span class="c n" style="right:423.2px">3545800.00 (3.58%)</span>
<span class="c" style="left:891px">Relative drawdown</span>
<span class="c n" style="left:1239.6px">81.16% (63640.00)</span>
</div>
<div class="row g" style="top:88.39px">
<span class="c" style="right:1244.5px">Total trades</span>
<span class="c n" style="right:873px">505004</span>
<span class="c" style="left:440.800px">Short positions (won %)</span>
<span class="c n" style="right:423.2px">0 (0.00%)</span>
<span class="c" style="left:891px">Long positions (won %)</span>
<span class="c n" style="left:1250.4px">505004 (23.35%)</span>
</div>
<div class="row w" style="top:102.35px">
<span class="c" style="left:440.800px">Profit trades (% of total)</span>
<span class="c n" style="right:423.2px">214294 (42.43%)</span>
<span class="c" style="left:891px">Loss trades (% of total)</span>
<span class="c n" style="left:1250.4px">290710 (57.57%)</span>
</div>
<div class="row g" style="top:116.32px">
<span class="c" style="right:873px">Largest</span>
<span class="c" style="left:440.800px">profit trade</span>
<span class="c n" style="right:423.2px">9000.00</span>
<span class="c" style="left:891px">loss trade</span>
<span class="c n" style="left:1278.3px">-9000.00</span>
</div>
<div class="row w" style="top:130.28px">
<span class="c" style="right:873px">Average</span>
<span class="c" style="left:440.800px">profit trade</span>
<span class="c n" style="right:423.2px">5331.49</span>
<span class="c" style="left:891px">loss trade</span>
<span class="c n" style="left:1278.3px">-3524.42</span>
</div>
<div class="row g" style="top:144.25px">
<span class="c" style="right:873px">Maximum</span>
<span class="c" style="left:440.800px">consecutive wins (profit in money)</span>
<span class="c n" style="right:423.2px">28 (247500.00)</span>
<span class="c" style="left:891px">consecutive losses (loss in money)</span>
<span class="c n" style="left:1252.7px">40 (-196000.00)</span>
</div>
<div class="row w" style="top:158.22px">
<span class="c" style="right:873px">Maximal</span>
<span class="c" style="left:440.800px">consecutive profit (count of wins)</span>
<span class="c n" style="right:423.2px">247500.00 (28)</span>
<span class="c" style="left:891px">consecutive loss (count of losses)</span>
<span class="c n" style="left:1253.7px">-196000.00 (40)</span>
</div>
<div class="row g" style="top:172.18px">
<span class="c" style="right:873px">Average</span>
<span class="c" style="left:440.800px">consecutive wins</span>
<span class="c n" style="right:423.2px">3</span>
<span class="c" style="left:891px">consecutive losses</span>
<span class="c n" style="left:1290px">4</span>
</div>
<div class="abs" style="left:439.200px;top:18.600px;width:841px;height:12.400px;background:#00f600;border-top:0.800px solid #9cc4ea;border-bottom:0.800px solid #9cc4ea;border-left:0.800px solid #6aa8dc;box-sizing:border-box"></div>
<svg class="abs" style="left:0;top:0" width="1280" height="190" viewBox="0 428.600 1280 190" font-family="Liberation Sans, sans-serif">
<g transform="translate(155.9 477.6) scale(1.02)" fill="#000" opacity="0.03"><path d="M0 0L36.5 37L31.13 42.37L0 10.75L-31.13 42.37L-36.5 37Z"/><path d="M-21.6 23.6L-14.6 16.6V77.8L-21.6 68.5Z"/><path d="M21.6 23.6L14.6 16.6V77.8L21.6 68.5Z"/><path d="M-3.9 9.75H3.9V88L0 92L-3.9 88Z"/><path d="M-14.6 44.4H-3.9V52.5H-14.6ZM3.9 44.4H14.6V52.5H3.9Z"/></g>
<g transform="translate(154.3 476) scale(1.02)" fill="#000" opacity="0.062"><path d="M0 0L36.5 37L31.13 42.37L0 10.75L-31.13 42.37L-36.5 37Z"/><path d="M-21.6 23.6L-14.6 16.6V77.8L-21.6 68.5Z"/><path d="M21.6 23.6L14.6 16.6V77.8L21.6 68.5Z"/><path d="M-3.9 9.75H3.9V88L0 92L-3.9 88Z"/><path d="M-14.6 44.4H-3.9V52.5H-14.6ZM3.9 44.4H14.6V52.5H3.9Z"/></g>
<g transform="translate(520.9 477.9) scale(1.02)" fill="#000" opacity="0.03"><path d="M0 0L36.5 37L31.13 42.37L0 10.75L-31.13 42.37L-36.5 37Z"/><path d="M-21.6 23.6L-14.6 16.6V77.8L-21.6 68.5Z"/><path d="M21.6 23.6L14.6 16.6V77.8L21.6 68.5Z"/><path d="M-3.9 9.75H3.9V88L0 92L-3.9 88Z"/><path d="M-14.6 44.4H-3.9V52.5H-14.6ZM3.9 44.4H14.6V52.5H3.9Z"/></g>
<g transform="translate(519.3 476.3) scale(1.02)" fill="#000" opacity="0.062"><path d="M0 0L36.5 37L31.13 42.37L0 10.75L-31.13 42.37L-36.5 37Z"/><path d="M-21.6 23.6L-14.6 16.6V77.8L-21.6 68.5Z"/><path d="M21.6 23.6L14.6 16.6V77.8L21.6 68.5Z"/><path d="M-3.9 9.75H3.9V88L0 92L-3.9 88Z"/><path d="M-14.6 44.4H-3.9V52.5H-14.6ZM3.9 44.4H14.6V52.5H3.9Z"/></g>
<g transform="translate(832.1 479.2) scale(1.02)" fill="#000" opacity="0.03"><path d="M0 0L36.5 37L31.13 42.37L0 10.75L-31.13 42.37L-36.5 37Z"/><path d="M-21.6 23.6L-14.6 16.6V77.8L-21.6 68.5Z"/><path d="M21.6 23.6L14.6 16.6V77.8L21.6 68.5Z"/><path d="M-3.9 9.75H3.9V88L0 92L-3.9 88Z"/><path d="M-14.6 44.4H-3.9V52.5H-14.6ZM3.9 44.4H14.6V52.5H3.9Z"/></g>
<g transform="translate(830.5 477.6) scale(1.02)" fill="#000" opacity="0.062"><path d="M0 0L36.5 37L31.13 42.37L0 10.75L-31.13 42.37L-36.5 37Z"/><path d="M-21.6 23.6L-14.6 16.6V77.8L-21.6 68.5Z"/><path d="M21.6 23.6L14.6 16.6V77.8L21.6 68.5Z"/><path d="M-3.9 9.75H3.9V88L0 92L-3.9 88Z"/><path d="M-14.6 44.4H-3.9V52.5H-14.6ZM3.9 44.4H14.6V52.5H3.9Z"/></g>
<g transform="translate(1135.6 478.8) scale(1.02)" fill="#000" opacity="0.03"><path d="M0 0L36.5 37L31.13 42.37L0 10.75L-31.13 42.37L-36.5 37Z"/><path d="M-21.6 23.6L-14.6 16.6V77.8L-21.6 68.5Z"/><path d="M21.6 23.6L14.6 16.6V77.8L21.6 68.5Z"/><path d="M-3.9 9.75H3.9V88L0 92L-3.9 88Z"/><path d="M-14.6 44.4H-3.9V52.5H-14.6ZM3.9 44.4H14.6V52.5H3.9Z"/></g>
<g transform="translate(1134 477.2) scale(1.02)" fill="#000" opacity="0.062"><path d="M0 0L36.5 37L31.13 42.37L0 10.75L-31.13 42.37L-36.5 37Z"/><path d="M-21.6 23.6L-14.6 16.6V77.8L-21.6 68.5Z"/><path d="M21.6 23.6L14.6 16.6V77.8L21.6 68.5Z"/><path d="M-3.9 9.75H3.9V88L0 92L-3.9 88Z"/><path d="M-14.6 44.4H-3.9V52.5H-14.6ZM3.9 44.4H14.6V52.5H3.9Z"/></g>
<text transform="translate(156.97 588.3) scale(1.2 1)" text-anchor="middle" font-size="15.5" font-weight="bold" letter-spacing="0.28" fill="#000" stroke="#000" stroke-width="0.7" opacity="0.03">YOFOREX</text>
<text transform="translate(155.67 587) scale(1.2 1)" text-anchor="middle" font-size="15.5" font-weight="bold" letter-spacing="0.28" fill="#000" stroke="#000" stroke-width="0.7" opacity="0.07">YOFOREX</text>
<text transform="translate(523.47 588.3) scale(1.2 1)" text-anchor="middle" font-size="15.5" font-weight="bold" letter-spacing="0.28" fill="#000" stroke="#000" stroke-width="0.7" opacity="0.03">YOFOREX</text>
<text transform="translate(522.17 587) scale(1.2 1)" text-anchor="middle" font-size="15.5" font-weight="bold" letter-spacing="0.28" fill="#000" stroke="#000" stroke-width="0.7" opacity="0.07">YOFOREX</text>
<text transform="translate(832.97 588.3) scale(1.2 1)" text-anchor="middle" font-size="15.5" font-weight="bold" letter-spacing="0.28" fill="#000" stroke="#000" stroke-width="0.7" opacity="0.03">YOFOREX</text>
<text transform="translate(831.67 587) scale(1.2 1)" text-anchor="middle" font-size="15.5" font-weight="bold" letter-spacing="0.28" fill="#000" stroke="#000" stroke-width="0.7" opacity="0.07">YOFOREX</text>
<text transform="translate(1135.47 588.3) scale(1.2 1)" text-anchor="middle" font-size="15.5" font-weight="bold" letter-spacing="0.28" fill="#000" stroke="#000" stroke-width="0.7" opacity="0.03">YOFOREX</text>
<text transform="translate(1134.17 587) scale(1.2 1)" text-anchor="middle" font-size="15.5" font-weight="bold" letter-spacing="0.28" fill="#000" stroke="#000" stroke-width="0.7" opacity="0.07">YOFOREX</text>
</svg>
</div>
<div class="abs" style="left:1085.500px;top:654.800px;font-size:13.700px;color:#b4b4b4;">Activate Windows</div>
<div class="abs" style="left:1085.500px;top:672.300px;font-size:10.330px;color:#c2c2c2;">Go to Settings to activate Windows.</div>
<svg class="abs" style="left:0;top:686px" width="1280" height="34" viewBox="0 686 1280 34" font-family="Liberation Sans, sans-serif">
<rect x="0" y="691" width="1280" height="29" fill="#f0f0f0"/>
<rect x="0" y="707.600" width="1280" height="1.100" fill="#fafafa"/>
<rect x="0" y="706.700" width="1280" height="0.900" fill="#e3e3e3"/>
<rect x="108.500" y="690" width="37.500" height="14.500" fill="#fff"/>
<path d="M0 691.200H108.500V704.600H146.200V691.200H1280" fill="none" stroke="#3c3c3c" stroke-width="1.300"/>
<g stroke="#8c8c8c" stroke-width="0.800"><path d="M32.500 693.500V702.500M72.500 693.500V702.500M186.200 693.500V702.500"/></g>
<g font-size="8.100" fill="#7d7d7d"><text x="25" y="700.900" text-anchor="end">Settings</text><text x="40" y="700.900" textLength="25.200" lengthAdjust="spacingAndGlyphs">Results</text><text x="79" y="700.900" textLength="22" lengthAdjust="spacingAndGlyphs">Graph</text><text x="152" y="700.900" textLength="27.600" lengthAdjust="spacingAndGlyphs">Journal</text></g>
<text x="115.500" y="700.900" font-size="8.100" fill="#111" stroke="#111" stroke-width="0.150" textLength="24" lengthAdjust="spacingAndGlyphs">Report</text>
<g stroke="#bdbdbd" stroke-width="0.800"><path d="M818.200 711V720M899 711V720M969.400 711V720M1019 711V720M1068.500 711V720M1116.400 711V720M1164.200 711V720M1211 711V720"/></g>
<g font-size="8.300" fill="#1c1c1c">
<text x="42.500" y="720.900" text-anchor="end">For Help, press F1</text>
<text x="822" y="720.900">Default</text>
<text x="902.800" y="720.900" textLength="58.500" lengthAdjust="spacingAndGlyphs">2025.10.08 22:00</text>
<text x="973.500" y="720.900" textLength="41" lengthAdjust="spacingAndGlyphs">O: 4042.415</text>
<text x="1023" y="720.900" textLength="41.400" lengthAdjust="spacingAndGlyphs">H: 4044.135</text>
<text x="1073.400" y="720.900" textLength="38.800" lengthAdjust="spacingAndGlyphs">L: 4014.748</text>
<text x="1120.700" y="720.900" textLength="39.500" lengthAdjust="spacingAndGlyphs">C: 4021.048</text>
<text x="1169" y="720.900" textLength="25" lengthAdjust="spacingAndGlyphs">V: 8485</text>
<text x="1234" y="720.900" textLength="34.500" lengthAdjust="spacingAndGlyphs">6149/4 kb</text>
</g>
<rect x="1215.8" y="714" width="1.300" height="6" fill="#5a9a2a"/>
<rect x="1217.8" y="714" width="1.300" height="6" fill="#5a9a2a"/>
<rect x="1219.8" y="714" width="1.300" height="6" fill="#5a9a2a"/>
<rect x="1221.8" y="714" width="1.300" height="6" fill="#5a9a2a"/>
<rect x="1223.8" y="714" width="1.300" height="6" fill="#5a9a2a"/>
<rect x="1225.8" y="714" width="1.300" height="6" fill="#3f78b0"/>
<rect x="1227.8" y="714" width="1.300" height="6" fill="#3f78b0"/>
<rect x="1229.8" y="714" width="1.300" height="6" fill="#3f78b0"/>
</svg>
</div>
</body>
</html>
